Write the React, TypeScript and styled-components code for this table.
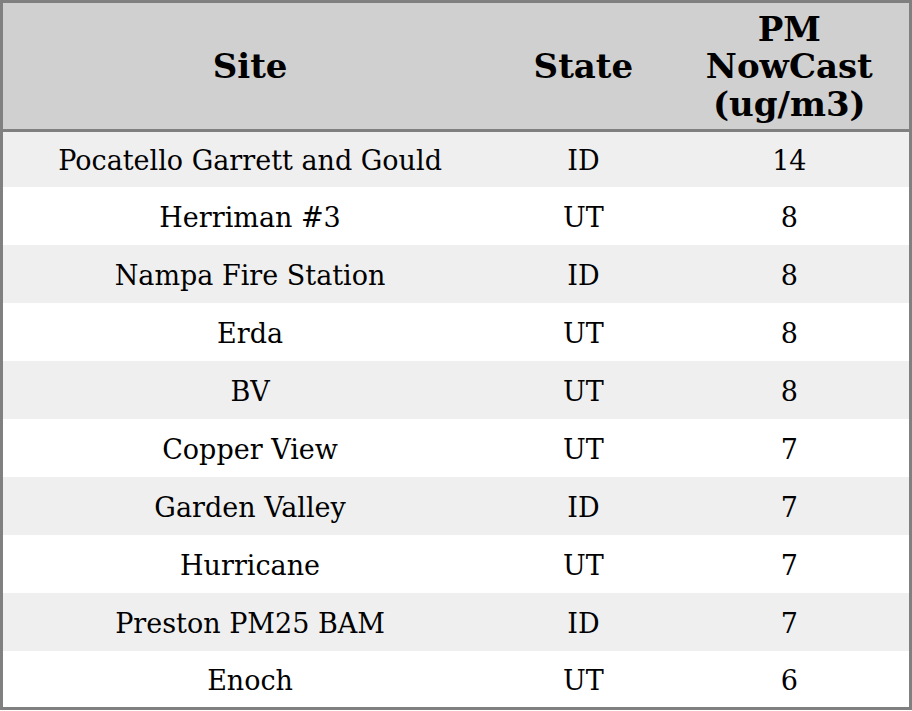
import styled, { createGlobalStyle } from "styled-components";

const GlobalStyle = createGlobalStyle`
  html, body {
    margin: 0;
    padding: 0;
    background: #ffffff;
  }
`;

const Table = styled.table`
  width: 912px;
  border-collapse: collapse;
  table-layout: fixed;
  border: 3px solid #808080;
  font-family: "DejaVu Serif", serif;
  color: #000;
`;

const HeadCell = styled.th`
  background: #d0d0d0;
  font-size: 34px;
  font-weight: bold;
  line-height: 37.5px;
  height: 129px;
  padding: 2px 4px 0;
  text-align: center;
  vertical-align: middle;
  border-bottom: 3px solid #808080;
  box-sizing: border-box;
`;

const Row = styled.tr<{ $striped: boolean }>`
  height: 58px;
  background: ${(p) => (p.$striped ? "#efefef" : "#ffffff")};

  &:first-child {
    height: 56px;
  }
`;

const Cell = styled.td`
  font-size: 27px;
  padding: 3px 0 0;
  text-align: center;
  vertical-align: middle;
`;

const rows = [
  ["Pocatello Garrett and Gould", "ID", "14"],
  ["Herriman #3", "UT", "8"],
  ["Nampa Fire Station", "ID", "8"],
  ["Erda", "UT", "8"],
  ["BV", "UT", "8"],
  ["Copper View", "UT", "7"],
  ["Garden Valley", "ID", "7"],
  ["Hurricane", "UT", "7"],
  ["Preston PM25 BAM", "ID", "7"],
  ["Enoch", "UT", "6"],
];

const App = () => {
  return (
    <>
      <GlobalStyle />
      <Table>
        <colgroup>
          <col style={{ width: 494 }} />
          <col style={{ width: 172 }} />
          <col style={{ width: 240 }} />
        </colgroup>
        <thead>
          <tr>
            <HeadCell>Site</HeadCell>
            <HeadCell>State</HeadCell>
            <HeadCell>
              PM
              <br />
              NowCast
              <br />
              (ug/m3)
            </HeadCell>
          </tr>
        </thead>
        <tbody>
          {rows.map(([site, state, pm], i) => (
            <Row key={site} $striped={i % 2 === 0}>
              <Cell>{site}</Cell>
              <Cell>{state}</Cell>
              <Cell>{pm}</Cell>
            </Row>
          ))}
        </tbody>
      </Table>
    </>
  );
};

export default App;
